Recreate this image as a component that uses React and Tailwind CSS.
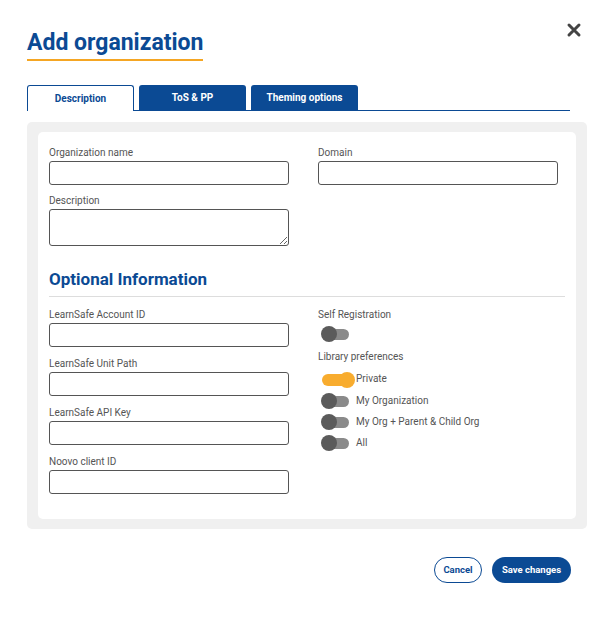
import { useState } from "react";

const font = { fontFamily: "Roboto, 'Noto Sans', sans-serif" };

function Field({ label, tall }) {
  return (
    <div className="flex flex-col">
      <label className="text-[10px] leading-[12px] text-[#555] mb-[2px]">{label}</label>
      {tall ? (
        <textarea className="w-[240px] h-[37px] border border-[#555] rounded-[3px] resize-y bg-white" />
      ) : (
        <input type="text" className="w-[240px] h-[24px] border border-[#555] rounded-[3px] bg-white" />
      )}
    </div>
  );
}

function Toggle({ on }) {
  if (on) {
    return (
      <div className="relative w-[34px] h-[16px] flex items-center">
        <div className="w-[30px] h-[12px] ml-[1px] rounded-full bg-[#f8ac2e]" />
        <div className="absolute top-0 left-[18px] w-[16px] h-[16px] rounded-full bg-[#f8ac2e]" />
      </div>
    );
  }
  return (
    <div className="relative w-[28px] h-[16px] flex items-center">
      <div className="w-[27px] h-[11px] ml-[1px] rounded-full bg-[#8a8a8a]" />
      <div className="absolute top-0 left-0 w-[16px] h-[16px] rounded-full bg-[#5b5b5b]" />
    </div>
  );
}

export default function App() {
  const [tab, setTab] = useState("Description");
  const tabs = ["Description", "ToS & PP", "Theming options"];
  const prefs = [
    { label: "Private", on: true },
    { label: "My Organization" },
    { label: "My Org + Parent & Child Org" },
    { label: "All" },
  ];

  return (
    <div className="w-[610px] h-[627px] bg-white relative" style={font}>
      {/* Close */}
      <button className="absolute left-[566px] top-[22px]">
        <svg width="16" height="16" viewBox="0 0 16 16">
          <path d="M3 3 L13 13 M13 3 L3 13" stroke="#444" strokeWidth="3" strokeLinecap="round" />
        </svg>
      </button>

      <div className="pt-[29px] pl-[27px]">
        {/* Header */}
        <div className="inline-flex flex-col">
          <h1 className="text-[23px] leading-[28px] font-bold text-[#0b4a94]">Add organization</h1>
          <div className="mt-[2px] h-[2px] bg-[#f5a623]" />
        </div>

        {/* Tabs */}
        <div className="mt-[24px] w-[543px] flex gap-[5px] items-end border-b border-[#0b4a94]">
          {tabs.map((t) => (
            <button
              key={t}
              onClick={() => setTab(t)}
              className={`w-[107px] rounded-t-[3px] text-[10px] font-bold ${
                tab === t
                  ? "bg-white text-[#0b4a94] border border-b-0 border-[#0b4a94] h-[26px] -mb-px"
                  : "bg-[#0b4a94] text-white h-[25px]"
              }`}
            >
              {t}
            </button>
          ))}
        </div>
      </div>

      {/* Panel */}
      <div className="ml-[27px] mt-[11px] w-[560px] bg-[#f0f0f0] rounded-[5px] py-[10px] px-[11px]">
        <div className="bg-white rounded-[5px] pt-[15px] px-[11px] pb-[25px]">
          <div className="grid grid-cols-[240px_240px] gap-x-[29px]">
            <div className="flex flex-col gap-[10px]">
              <Field label="Organization name" />
              <Field label="Description" tall />
            </div>
            <div>
              <Field label="Domain" />
            </div>
          </div>

          <h2 className="mt-[22px] text-[17px] leading-[22px] font-bold text-[#0b4a94]">Optional Information</h2>
          <div className="mt-[6px] h-px bg-[#ddd]" />

          <div className="mt-[12px] grid grid-cols-[240px_240px] gap-x-[29px]">
            <div className="flex flex-col gap-[11px]">
              <Field label="LearnSafe Account ID" />
              <Field label="LearnSafe Unit Path" />
              <Field label="LearnSafe API Key" />
              <Field label="Noovo client ID" />
            </div>
            <div className="flex flex-col">
              <span className="text-[10px] leading-[12px] text-[#555]">Self Registration</span>
              <div className="mt-[5px] ml-[3px]">
                <Toggle />
              </div>
              <span className="mt-[9px] text-[10px] leading-[12px] text-[#555]">Library preferences</span>
              <div className="mt-[9px] ml-[3px] flex flex-col gap-[5px]">
                {prefs.map((p) => (
                  <div key={p.label} className="flex items-center">
                    <Toggle on={p.on} />
                    <span
                      className={`text-[10px] leading-[12px] text-[#555] ${p.on ? "-mt-[3px] ml-[1px]" : "ml-[7px]"}`}
                    >
                      {p.label}
                    </span>
                  </div>
                ))}
              </div>
            </div>
          </div>
        </div>
      </div>

      {/* Footer */}
      <div className="mt-[28px] w-[571px] flex justify-end gap-[10px]">
        <button className="w-[48px] h-[26px] rounded-full border border-[#0b4a94] text-[#0b4a94] text-[9.5px] font-bold">
          Cancel
        </button>
        <button className="w-[79px] h-[26px] rounded-full bg-[#0b4a94] text-white text-[9.5px] font-bold">
          Save changes
        </button>
      </div>
    </div>
  );
}
